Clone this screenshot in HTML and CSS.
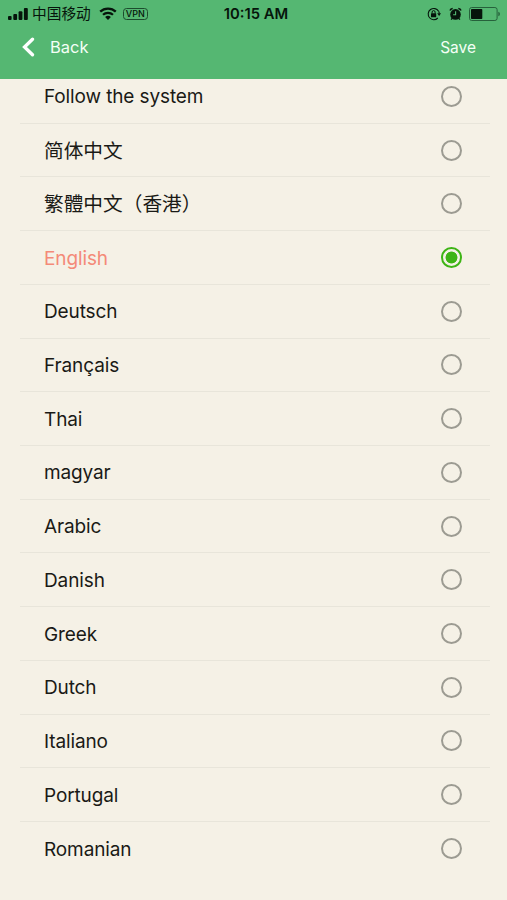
FILE: index.html
```
<!DOCTYPE html>
<html lang="en">
<head>
    <meta charset="utf-8">
    <title>Language</title>
    <link rel="stylesheet" href="styles.css">
</head>
<body>
    <header class="header">
        <div class="status-bar">
            <div class="status-left">
                <svg class="signal" width="20" height="12" viewBox="0 0 20 12">
                    <rect x="0" y="8" width="3.6" height="4" rx="1"/>
                    <rect x="5.3" y="6" width="3.8" height="6" rx="1"/>
                    <rect x="10.6" y="3.2" width="3.8" height="8.8" rx="1"/>
                    <rect x="15.9" y="0" width="3.9" height="12" rx="1"/>
                </svg>
                <span class="carrier">中国移动</span>
                <svg class="wifi" width="18" height="13" viewBox="0 0 18 13">
                    <path d="M1.2 4.7 A11.2 11.2 0 0 1 16.8 4.7" fill="none" stroke="#06140b" stroke-width="2.3"/>
                    <path d="M4 7.8 A7.2 7.2 0 0 1 14 7.8" fill="none" stroke="#06140b" stroke-width="2.2"/>
                    <path d="M9 13 L6.1 10.1 A4.1 4.1 0 0 1 11.9 10.1 Z"/>
                </svg>
                <span class="vpn">VPN</span>
            </div>
            <div class="time">10:15 AM</div>
            <div class="status-right">
                <svg width="14" height="14" viewBox="0 0 14 14">
                    <path d="M11.6 4.2 A5.6 5.6 0 1 0 10.8 11" fill="none" stroke="#06140b" stroke-width="1.1"/>
                    <path d="M11.6 4.2 A5.6 5.6 0 0 1 12.3 6.5" fill="none" stroke="#06140b" stroke-width="1.1"/>
                    <path d="M10.2 6.2 H14 L12.1 9 Z"/>
                    <rect x="4" y="6.3" width="5.2" height="4" rx=".5"/>
                    <path d="M5.1 6.5 V5.1 a1.5 1.5 0 0 1 3 0 V6.5" fill="none" stroke="#06140b" stroke-width="1"/>
                </svg>
                <svg class="alarm" width="13" height="14" viewBox="0 0 13 14">
                    <circle cx="6.5" cy="7.4" r="5.3"/>
                    <path d="M1 3.5 A3 3 0 0 1 3.7 1.4 M9.3 1.4 A3 3 0 0 1 12 3.5 M3.1 11.4 L2.2 12.6 M9.9 11.4 L10.8 12.6" fill="none" stroke="#06140b" stroke-width="1.5"/>
                    <path d="M6.6 4.2 V7.8 H4.1" fill="none" stroke="#55b772" stroke-width="1.1"/>
                </svg>
                <svg width="32" height="14" viewBox="0 0 32 14">
                    <rect x=".5" y=".5" width="27.6" height="13" rx="2.2" fill="none" stroke="#26613b" stroke-width="1"/>
                    <rect x="2" y="2" width="11.3" height="10" rx=".8"/>
                    <path d="M29.3 4.8 a2.3 2.3 0 0 1 0 4.4 Z" fill="#26613b"/>
                </svg>
            </div>
        </div>
        <nav class="nav-bar">
            <a class="back">
                <svg width="14" height="20" viewBox="0 0 14 20">
                    <path d="M11.5 2.2 L3.5 10 L11.5 17.8" fill="none" stroke="#fff" stroke-width="3.3" stroke-linecap="round" stroke-linejoin="miter"/>
                </svg>
                <span>Back</span>
            </a>
            <a class="save">Save</a>
        </nav>
    </header>

    <ul class="language-list">
        <li class="language"><span>Follow the system</span><i class="radio"></i></li>
        <li class="language chinese" lang="zh-CN"><span>简体中文</span><i class="radio"></i></li>
        <li class="language chinese" lang="zh-CN"><span>繁體中文（香港）</span><i class="radio"></i></li>
        <li class="language selected"><span>English</span><i class="radio"></i></li>
        <li class="language"><span>Deutsch</span><i class="radio"></i></li>
        <li class="language"><span>Français</span><i class="radio"></i></li>
        <li class="language"><span>Thai</span><i class="radio"></i></li>
        <li class="language"><span>magyar</span><i class="radio"></i></li>
        <li class="language"><span>Arabic</span><i class="radio"></i></li>
        <li class="language"><span>Danish</span><i class="radio"></i></li>
        <li class="language"><span>Greek</span><i class="radio"></i></li>
        <li class="language"><span>Dutch</span><i class="radio"></i></li>
        <li class="language"><span>Italiano</span><i class="radio"></i></li>
        <li class="language"><span>Portugal</span><i class="radio"></i></li>
        <li class="language"><span>Romanian</span><i class="radio"></i></li>
    </ul>
</body>
</html>
```
FILE: styles.css
```
* {
    box-sizing: border-box;
}

body {
    margin: 0;
    height: 900px;
    overflow: hidden;
    background: #f5f1e6;
    color: #1a1a16;
    font-family: Inter, "Noto Sans CJK SC", sans-serif;
}

.header {
    position: relative;
    z-index: 1;
    height: 79px;
    background: #55b772;
}

.status-bar {
    display: grid;
    grid-template-columns: 1fr auto 1fr;
    align-items: center;
    height: 27px;
    padding: 0 6px 0 8px;
    color: #06140b;
    fill: #06140b;
}

.status-left,
.status-right {
    display: flex;
    align-items: center;
}

.status-right {
    justify-content: flex-end;
}

.carrier {
    margin-left: 4px;
    font-size: 14.7px;
    line-height: 20px;
}

.wifi {
    margin-left: 8px;
}

.vpn {
    width: 25px;
    height: 12px;
    margin-left: 6px;
    border: 1px solid #1c4c2d;
    border-radius: 3.5px;
    font-size: 9px;
    font-weight: 500;
    line-height: 10px;
    text-align: center;
}

.time {
    padding-left: 3px;
    font-size: 14.8px;
    font-weight: 600;
}

.alarm {
    margin: 0 7px 0 8px;
}

.nav-bar {
    display: flex;
    align-items: center;
    justify-content: space-between;
    height: 40px;
    padding: 0 31px 0 21px;
    color: #f4fff6;
}

.back {
    display: flex;
    align-items: center;
    gap: 15px;
    font-size: 16.5px;
}

.save {
    font-size: 15.5px;
}

.language-list {
    margin: -9px 17px 0 20px;
    padding: 0;
    list-style: none;
}

.language {
    display: flex;
    align-items: center;
    justify-content: space-between;
    height: 53.73px;
    padding: 0 28px 0 24px;
    border-bottom: 1px solid #e8e5da;
    font-size: 19px;
    letter-spacing: -0.12px;
}

.language span {
    padding-top: 1px;
}

.language:last-child {
    border-bottom: none;
}

.chinese {
    font-family: "Noto Sans CJK SC", sans-serif;
    font-size: 19.7px;
    letter-spacing: 0;
}

.chinese span {
    padding: 0 0 2px;
}

.radio {
    width: 21px;
    height: 21px;
    border: 2px solid #9c9b92;
    border-radius: 50%;
}

.selected {
    color: #f48a78;
}

.selected .radio {
    border-color: #3db415;
    background: radial-gradient(circle, #3db415 5.6px, transparent 6.3px);
}
```
